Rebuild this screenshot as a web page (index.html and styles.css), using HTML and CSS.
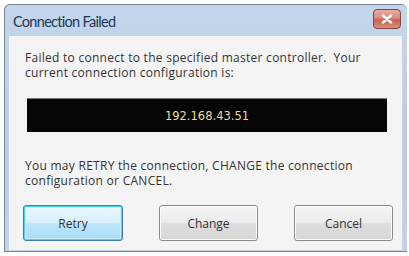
FILE: index.html
```html
<!DOCTYPE html>
<html>
<head>
<meta charset="utf-8">
<link rel="stylesheet" href="styles.css">
</head>
<body>
<div class="window">
  <div class="titlebar">
    <span class="title">Connection Failed</span>
    <span class="close">
      <svg width="12" height="10" viewBox="0 0 12 10"><path d="M2 1.5 L10 8.5 M10 1.5 L2 8.5" stroke="#fff" stroke-width="2.4" stroke-linecap="round"/></svg>
    </span>
  </div>
  <div class="content">
    <p class="msg">Failed to connect to the specified master controller.&nbsp; Your current connection configuration is:</p>
    <div class="ipbox">192.168.43.51</div>
    <p class="msg msg2">You may RETRY the connection, CHANGE the connection configuration or CANCEL.</p>
    <div class="buttons">
      <button class="btn btn-default">Retry</button>
      <button class="btn">Change</button>
      <button class="btn">Cancel</button>
    </div>
  </div>
</div>
</body>
</html>
```
FILE: styles.css
```css
html, body {
  margin: 0;
  padding: 0;
  background: #ffffff;
}
body {
  font-family: "Open Sans", "DejaVu Sans", sans-serif;
}
.window {
  margin: 4px 0 0 4px;
  width: 403px;
  height: 248px;
  border: 1px solid #7b8797;
  border-right: none;
  border-radius: 6px 6px 0 0;
  background: linear-gradient(#c3d6eb, #b7cde6 60%, #bfd4ea);
  padding: 0 4px 0 3px;
  box-sizing: border-box;
  display: flex;
  flex-direction: column;
}
.titlebar {
  height: 30px;
  display: flex;
  align-items: center;
  justify-content: space-between;
  padding-left: 5px;
  padding-right: 2px;
  flex: none;
}
.title {
  font-family: "Lato", "Open Sans", sans-serif;
  font-size: 14.5px;
  color: #1f3658;
  letter-spacing: -0.7px;
  margin-top: 2px;
}
.close {
  width: 28px;
  height: 20px;
  box-sizing: border-box;
  border: 1px solid #7d4842;
  border-radius: 4px;
  background: linear-gradient(#e8aca2, #d98a7c 45%, #c9604f 55%, #d98f7c);
  display: flex;
  align-items: center;
  justify-content: center;
  margin-top: -2px;
}
.close svg { display: block; }
.content {
  flex: 1;
  background: #f4f4f4;
  border: 1px solid #c9d3df;
  padding: 14px 9px 0 16px;
  box-sizing: border-box;
}
.msg {
  margin: 0;
  font-size: 12px;
  letter-spacing: 0.27px;
  line-height: 15px;
  color: #333333;
  width: 372px;
}
.ipbox {
  margin: 18px 0 0 2px;
  width: 360px;
  height: 34px;
  background: #050505;
  border-top: 1px solid #777;
  box-sizing: border-box;
  color: #e6dd9a;
  font-family: "DejaVu Sans", sans-serif;
  font-size: 11.5px;
  display: flex;
  align-items: center;
  justify-content: center;
}
.msg2 {
  margin-top: 26px;
}
.buttons {
  display: flex;
  justify-content: space-between;
  margin: 17px 0 0 -2px;
}
.btn {
  width: 99px;
  height: 36px;
  font-family: "Open Sans", "DejaVu Sans", sans-serif;
  font-size: 12px;
  color: #333333;
  border: 1px solid #8a8a8a;
  border-radius: 3px;
  background: linear-gradient(#f6f6f6, #ebebeb 48%, #dddddd 52%, #d6d6d6);
  box-shadow: inset 0 0 0 1px #fcfcfc;
  padding: 0;
}
.btn-default {
  width: 100px;
  border: 1px solid #3b7fb1;
  background: linear-gradient(#eaf6fd, #d9f0fc 48%, #bee6fd 52%, #a7d9f5);
  box-shadow: inset 0 0 0 1px #48d0f6, inset 0 0 0 2px #c8ecfb;
}
```
